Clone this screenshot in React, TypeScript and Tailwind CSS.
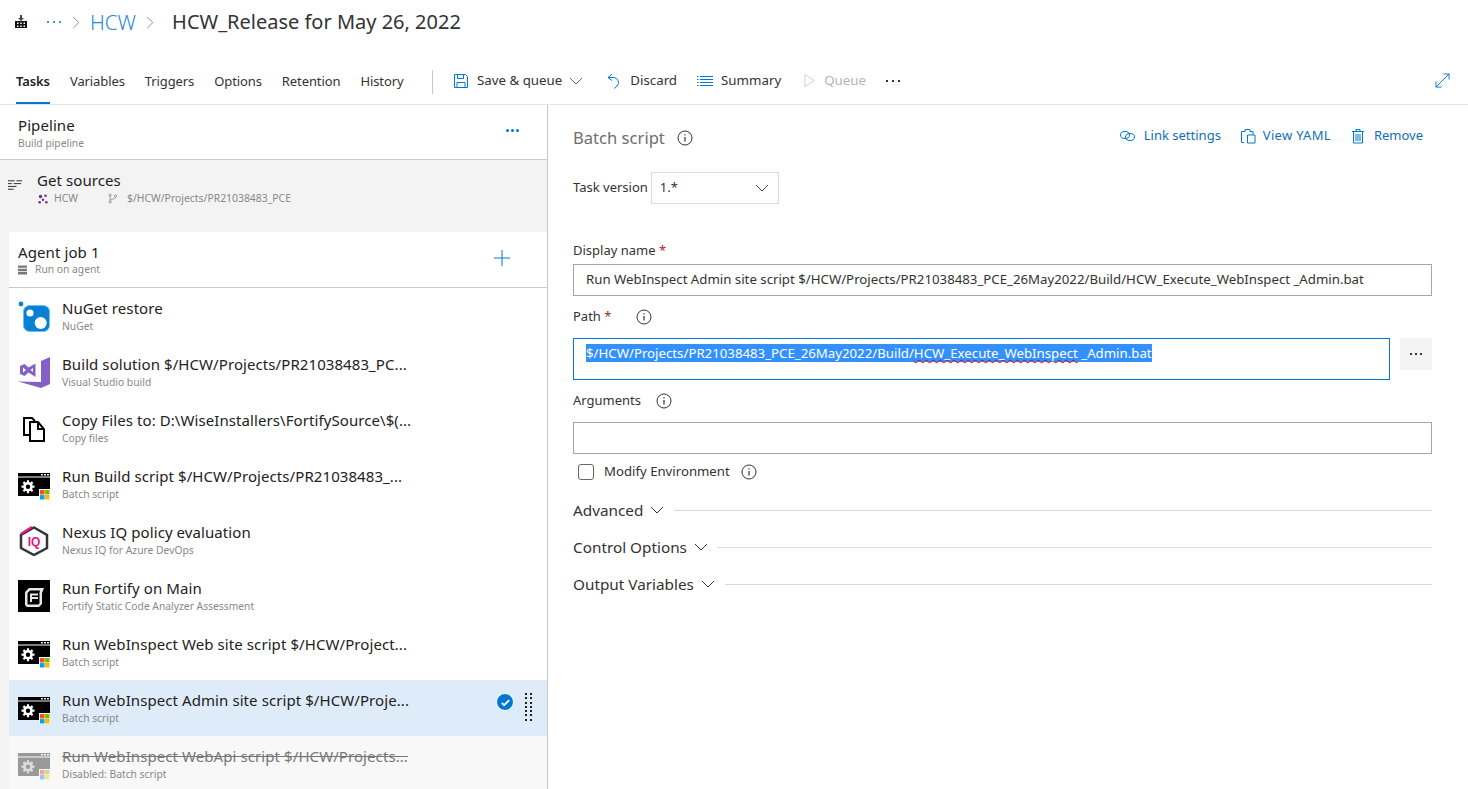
import React from "react";

const B = "#0078d4";

function Info({ className = "" }: { className?: string }) {
  return (
    <svg viewBox="0 0 16 16" className={`w-[16px] h-[16px] ${className}`} fill="none" stroke="#333" strokeWidth="1">
      <circle cx="8" cy="8" r="7" />
      <path d="M8 7v4.5M8 4.2v1.3" strokeWidth="1.2" />
    </svg>
  );
}

function Chevron({ className = "", color = "#333" }: { className?: string; color?: string }) {
  return (
    <svg viewBox="0 0 14 8" className={`w-[14px] h-[8px] ${className}`} fill="none" stroke={color} strokeWidth="1">
      <path d="M1 1l6 6 6-6" />
    </svg>
  );
}

function BatchIcon({ faded = false }: { faded?: boolean }) {
  const fg = faded ? "#999999" : "#000000";
  return (
    <svg viewBox="0 0 32 32" className="w-[32px] h-[32px]">
      <rect x="0" y="5" width="32" height="3.500" fill={fg} />
      <rect x="0" y="9.500" width="32" height="18.500" fill={fg} />
      <rect x="23" y="6" width="2" height="1.400" fill="#fff" />
      <rect x="26" y="6" width="2" height="1.400" fill="#fff" />
      <rect x="29" y="6" width="2" height="1.400" fill="#fff" />
      <g fill="none" stroke={faded ? "#ddd" : "#fff"}>
        <circle cx="10" cy="18.700" r="3.500" strokeWidth="2.600" />
        <path d="M10 12.200v2.600M10 22.600v2.600M3.500 18.700h2.600M13.900 18.700h2.600M5.400 14.100l1.800 1.800M12.800 21.500l1.800 1.800M14.600 14.100l-1.800 1.800M7.200 21.500l-1.800 1.800" strokeWidth="2.200" />
      </g>
      <rect x="21" y="21" width="11" height="11" fill="#fff" />
      <rect x="22" y="22" width="4.500" height="4.500" fill={faded ? "#f3a58c" : "#f25022"} />
      <rect x="27" y="22" width="4.500" height="4.500" fill={faded ? "#c3dc9a" : "#7fba00"} />
      <rect x="22" y="27" width="4.500" height="4.500" fill={faded ? "#8ccdf3" : "#00a4ef"} />
      <rect x="27" y="27" width="4.500" height="4.500" fill={faded ? "#ffe08c" : "#ffb900"} />
    </svg>
  );
}

function NugetIcon() {
  return (
    <svg viewBox="0 0 32 32" className="w-[32px] h-[32px]">
      <circle cx="3" cy="4" r="2.400" fill="#0a84dc" />
      <rect x="5.500" y="5.500" width="26" height="26" rx="6" fill="#0a7fd6" stroke="#6cc0ee" strokeWidth="1" />
      <circle cx="12" cy="13" r="3.600" fill="#fff" />
      <circle cx="22.700" cy="23" r="6" fill="#fff" />
    </svg>
  );
}

function VsIcon() {
  return (
    <svg viewBox="0 0 32 32" className="w-[32px] h-[32px]">
      <path d="M23 5L32 1V28L23 32L0 25.500L23 26Z" fill="#8661c5" />
      <path d="M2 10L6.500 8L10.500 11.500L17.500 7.500V21L10.500 16.500L6.500 20L2 18ZM5 11.500V16.500L8 14ZM12.500 14L15 16V12Z" fill="#8661c5" fillRule="evenodd" />
    </svg>
  );
}

function CopyIcon() {
  return (
    <svg viewBox="0 0 32 32" className="w-[32px] h-[32px]" fill="none" stroke="#000" strokeWidth="2">
      <path d="M11 23H6V6h8l3 3" />
      <path d="M12 10h8l6 7v12H12z" fill="#fff" />
      <path d="M20 10v7h6" />
    </svg>
  );
}

function NexusIcon() {
  return (
    <svg viewBox="0 0 32 32" className="w-[32px] h-[32px]">
      <path d="M16 3.500L29 11V24L16 31L3 24V11Z" fill="none" stroke="#33333a" strokeWidth="2.500" />
      <path d="M3 10L14 3" stroke="#e6127d" strokeWidth="2.500" fill="none" />
      <text x="16" y="22" textAnchor="middle" fontFamily="'Liberation Sans', sans-serif" fontWeight="700" fontSize="12" fill="#e6127d">IQ</text>
    </svg>
  );
}

function FortifyIcon() {
  return (
    <svg viewBox="0 0 32 32" className="w-[32px] h-[32px]">
      <rect width="32" height="32" fill="#000" />
      <path d="M11 8h15l-2 5v11l-3 3H9l-2-2V12z" fill="#e6e6e6" />
      <path d="M12 10.500h10l-.500 2v11l-1 1H10l-.500-.500V13z" fill="#000" />
      <path d="M12 13.500h8v2h-6v1.500h6v2h-6v3h-2z" fill="#e6e6e6" />
    </svg>
  );
}

function Row({ icon, title, sub, selected, disabled }: { icon: React.ReactNode; title: string; sub: string; selected?: boolean; disabled?: boolean }) {
  return (
    <div className={`relative flex h-[56px] ml-[9px] pl-[9px] items-center ${selected ? "bg-[#deecf9]" : disabled ? "bg-[#f8f8f8]" : "bg-white"}`}>
      <div className="w-[32px] h-[32px] shrink-0">{icon}</div>
      <div className="ml-[12px] flex flex-col">
        <div className={`text-[15px] tracking-[0.08px] leading-[19px] whitespace-nowrap ${disabled ? "text-[#777] line-through" : "text-[#222]"}`}>{title}</div>
        <div className="text-[10.3px] leading-[13px] mt-[2px] text-[#8a8886] whitespace-nowrap">{sub}</div>
      </div>
      {selected && (
        <>
          <div className="absolute left-[487px] top-[13px] w-[18px] h-[18px] rounded-full bg-[#0078d4] border border-white flex items-center justify-center">
            <svg viewBox="0 0 12 12" className="w-[11px] h-[11px]" fill="none" stroke="#fff" strokeWidth="2"><path d="M2 6.500l2.500 2.500L10 3.500" /></svg>
          </div>
          <div className="absolute left-[516px] top-[13px] grid grid-cols-2 gap-x-[3px] gap-y-[2.3px]">
            {Array.from({ length: 14 }).map((_, i) => (
              <span key={i} className="w-[2px] h-[2px] bg-[#222]" />
            ))}
          </div>
        </>
      )}
    </div>
  );
}

function Tab({ label, active }: { label: string; active?: boolean }) {
  return (
    <div className={`relative h-full flex items-center text-[13px] tracking-[-0.1px] ${active ? "font-semibold text-[#222]" : "text-[#333]"}`}>
      {label}
      {active && <div className="absolute left-0 right-0 bottom-0 h-[2px] bg-[#0078d4]" />}
    </div>
  );
}

const inputCls = "h-[32px] border border-[#a6a6a6] flex items-center px-[12px] text-[13.24px] text-[#333] whitespace-nowrap";

export default function App() {
  return (
    <div className="w-[1468px] h-[789px] overflow-hidden bg-white text-[#333] font-['Noto_Sans',sans-serif]">
      {/* breadcrumb */}
      <div className="h-[44px] flex items-center">
        <svg viewBox="0 0 14 14" className="ml-[14px] w-[14px] h-[14px]">
          <path d="M6 0h2v3h2L7 6 4 3h2V0z" fill="#444" />
          <path d="M1 6h12v7H1z" fill="#111" />
          <path d="M3 7.500h1.500V9H3zM6.300 7.500h1.500V9H6.300zM9.500 7.500H11V9H9.500zM3 10.500h1.500V12H3zM6.300 10.500h1.500V12H6.300zM9.500 10.500H11V12H9.500z" fill="#fff" />
        </svg>
        <span className="ml-[19px] flex gap-[4px]">
          <span className="w-[2px] h-[2px] rounded-full bg-[#0078d4]" />
          <span className="w-[2px] h-[2px] rounded-full bg-[#0078d4]" />
          <span className="w-[2px] h-[2px] rounded-full bg-[#0078d4]" />
        </span>
        <svg viewBox="0 0 8 14" className="ml-[11px] w-[8px] h-[13px]" fill="none" stroke="#888"><path d="M1 1l6 6-6 6" /></svg>
        <span className="ml-[10px] text-[20.500px] font-light text-[#2b88d8]">HCW</span>
        <svg viewBox="0 0 8 14" className="ml-[10px] w-[8px] h-[13px]" fill="none" stroke="#888"><path d="M1 1l6 6-6 6" /></svg>
        <span className="ml-[18px] text-[20px] text-[#333]">HCW_Release for May 26, 2022</span>
      </div>

      {/* toolbar */}
      <div className="h-[61px] border-b border-[#e6e6e6] flex items-stretch pl-[16px] pr-[18px] pt-[15px]">
        <div className="flex gap-[20px] items-stretch w-[416px]">
          <Tab label="Tasks" active />
          <Tab label="Variables" />
          <Tab label="Triggers" />
          <Tab label="Options" />
          <Tab label="Retention" />
          <Tab label="History" />
        </div>
        <div className="w-px h-[24px] bg-[#c8c8c8] self-center" />
        <div className="flex items-center text-[13.3px] text-[#333] ml-[20px] mb-[2px]">
          <svg viewBox="0 0 16 16" className="w-[16px] h-[16px]" fill="none" stroke={B}>
            <path d="M1.500 1.500h11l2 2v11h-13z" />
            <path d="M4.500 1.500v4h6v-4M4 14.500v-5h8v5" />
          </svg>
          <span className="ml-[8px]">Save &amp; queue</span>
          <Chevron className="ml-[7px]" color="#666" />
          <svg viewBox="0 0 16 16" className="ml-[23px] w-[16px] h-[16px]" fill="none" stroke={B}>
            <path d="M6 1L2 4.500 6 7.500" />
            <path d="M2 4.500h6a5 5 0 013 8.500l-3 2.500" />
          </svg>
          <span className="ml-[8px]">Discard</span>
          <svg viewBox="0 0 16 16" className="ml-[20px] w-[16px] h-[16px]" fill="none" stroke={B}>
            <path d="M3 3.500h13M3 6.500h13M3 9.500h13M3 12.500h13M0 3.500h1.500M0 6.500h1.500M0 9.500h1.500M0 12.500h1.500" />
          </svg>
          <span className="ml-[8px]">Summary</span>
          <svg viewBox="0 0 14 16" className="ml-[23px] w-[12px] h-[15px]" fill="none" stroke="#c8c8c8"><path d="M1 1l11 7-11 7z" /></svg>
          <span className="ml-[8px] text-[#b4b4b4]">Queue</span>
          <span className="ml-[20px] flex gap-[4px] items-center">
            <span className="w-[2px] h-[2px] bg-[#333]" />
            <span className="w-[2px] h-[2px] bg-[#333]" />
            <span className="w-[2px] h-[2px] bg-[#333]" />
          </span>
        </div>
        <svg viewBox="0 0 16 16" className="ml-auto self-center w-[15px] h-[15px] mb-[2px]" fill="none" stroke={B}>
          <path d="M1 15L15 1M9 1h6v6M1 9v6h6" />
        </svg>
      </div>

      <div className="flex h-[684px]">
        {/* left */}
        <div className="w-[548px] border-r border-[#c8c8c8] bg-[#f4f4f4] shrink-0 overflow-hidden">
          <div className="relative h-[55px] bg-white border-b border-[#c8c8c8] pl-[18px] pt-[11px]">
            <div className="text-[15px] tracking-[0.08px] leading-[19px] text-[#222]">Pipeline</div>
            <div className="text-[10.3px] leading-[13px] mt-[2px] text-[#8a8886]">Build pipeline</div>
            <span className="absolute left-[506px] top-[24px] flex gap-[2px]">
              <span className="w-[3px] h-[3px] rounded-full bg-[#0078d4]" />
              <span className="w-[3px] h-[3px] rounded-full bg-[#0078d4]" />
              <span className="w-[3px] h-[3px] rounded-full bg-[#0078d4]" />
            </span>
          </div>
          <div className="h-[72px] flex items-start pt-[11px] bg-[#f3f3f3]">
            <svg viewBox="0 0 16 12" className="ml-[8px] mt-[8px] w-[15px] h-[12px]" fill="none" stroke="#222">
              <path d="M0 1.500h7M9 1.500h6M0 4.500h4M6 4.500h8M0 7.500h9M0 10.500h6" />
            </svg>
            <div className="ml-[14px]">
              <div className="text-[15px] tracking-[0.08px] leading-[19px] text-[#222]">Get sources</div>
              <div className="flex items-center text-[10.4px] leading-[13px] mt-[2px] text-[#8a8886]">
                <svg viewBox="0 0 12 12" className="ml-[1px] w-[10px] h-[10px]" fill="#6b2c91">
                  <circle cx="3" cy="3" r="2" /><circle cx="9" cy="2" r="1.500" /><circle cx="6" cy="7" r="1.500" /><circle cx="2" cy="10" r="1.500" /><circle cx="10" cy="10" r="1.500" />
                </svg>
                <span className="ml-[6px] w-[54px]">HCW</span>
                <svg viewBox="0 0 12 12" className="w-[10px] h-[11px]" fill="none" stroke="#888">
                  <circle cx="2.500" cy="2" r="1.300" /><circle cx="2.500" cy="10" r="1.300" /><circle cx="9" cy="3" r="1.300" /><path d="M2.500 3.500v5M9 4.500C9 7 5 6 3 8" />
                </svg>
                <span className="ml-[9px]">$/HCW/Projects/PR21038483_PCE</span>
              </div>
            </div>
          </div>
          <div className="relative h-[56px] ml-[9px] bg-white border-b border-[#c8c8c8] pl-[9px] pt-[11px]">
            <div className="text-[15px] tracking-[0.1px] leading-[19px] text-[#222]">Agent job 1</div>
            <div className="flex items-center text-[10.3px] leading-[13px] mt-[1px] text-[#8a8886]">
              <svg viewBox="0 0 10 10" className="w-[9px] h-[10px]" fill="#777">
                <path d="M0 0h10v2.500H0zM0 3.500h10V6H0zM0 7h10v3H0z" />
              </svg>
              <span className="ml-[8px]">Run on agent</span>
            </div>
            <svg viewBox="0 0 16 16" className="absolute left-[485px] top-[18px] w-[16px] h-[16px]" fill="none" stroke={B}>
              <path d="M8 0v16M0 8h16" />
            </svg>
          </div>
          <Row icon={<NugetIcon />} title="NuGet restore" sub="NuGet" />
          <Row icon={<VsIcon />} title="Build solution $/HCW/Projects/PR21038483_PC..." sub="Visual Studio build" />
          <Row icon={<CopyIcon />} title="Copy Files to: D:\WiseInstallers\FortifySource\$(..." sub="Copy files" />
          <Row icon={<BatchIcon />} title="Run Build script $/HCW/Projects/PR21038483_..." sub="Batch script" />
          <Row icon={<NexusIcon />} title="Nexus IQ policy evaluation" sub="Nexus IQ for Azure DevOps" />
          <Row icon={<FortifyIcon />} title="Run Fortify on Main" sub="Fortify Static Code Analyzer Assessment" />
          <Row icon={<BatchIcon />} title="Run WebInspect Web site script $/HCW/Project..." sub="Batch script" />
          <Row icon={<BatchIcon />} title="Run WebInspect Admin site script $/HCW/Proje..." sub="Batch script" selected />
          <Row icon={<BatchIcon faded />} title="Run WebInspect WebApi script $/HCW/Projects..." sub="Disabled: Batch script" disabled />
        </div>

        {/* right */}
        <div className="flex-1 pl-[25px] pr-[36px] relative">
          <div className="flex items-center h-[20px] mt-[23px]">
            <span className="text-[16.6px] text-[#6e6e6e]">Batch script</span>
            <Info className="ml-[12px]" />
            <div className="ml-auto flex items-center text-[13px] text-[#106ebe] mr-[9px] mb-[4px]">
              <svg viewBox="0 0 16 12" className="w-[17px] h-[12px]" fill="none" stroke={B}>
                <ellipse cx="5.500" cy="5" rx="4.500" ry="3.500" /><ellipse cx="10.500" cy="7" rx="4.500" ry="3.500" />
              </svg>
              <span className="ml-[8px]">Link settings</span>
              <svg viewBox="0 0 16 16" className="ml-[19px] w-[16px] h-[16px]" fill="none" stroke={B}>
                <path d="M4 14.500H1.500v-11H5V1.500h5v2h3v3" /><path d="M7.500 7h7.500v8H7.500z" />
              </svg>
              <span className="ml-[7px] tracking-[0.3px]">View YAML</span>
              <svg viewBox="0 0 16 16" className="ml-[19px] w-[16px] h-[16px]" fill="none" stroke={B}>
                <path d="M2 3.500h12M6 3.500V1.500h4v2M3.500 3.500v11.500h9V3.500M6 6v7M8 6v7M10 6v7" />
              </svg>
              <span className="ml-[8px]">Remove</span>
            </div>
          </div>

          <div className="flex items-center mt-[24px]">
            <span className="text-[13px] leading-[18px] mr-[3px] mb-[2px]">Task version</span>
            <div className="w-[128px] h-[32px] border border-[#d9d9d9] flex items-center justify-between pl-[8px] pr-[9px] text-[13px]">
              <span>1.*</span>
              <Chevron color="#444" />
            </div>
          </div>

          <div className="text-[13px] leading-[18px] mt-[37px]">Display name <span className="text-[#a4262c]">*</span></div>
          <div className={`${inputCls} mt-[5px]`}>Run WebInspect Admin site script $/HCW/Projects/PR21038483_PCE_26May2022/Build/HCW_Execute_WebInspect _Admin.bat</div>

          <div className="flex items-center mt-[12px] h-[18px] text-[13px]">
            <span>Path <span className="text-[#a4262c]">*</span></span>
            <Info className="ml-[25px]" />
          </div>
          <div className="flex mt-[12px]">
            <div className="flex-1 h-[42px] border border-[#0078d4] pl-[12px] pt-[5px] text-[13.24px] leading-[19px] whitespace-nowrap">
              <span className="bg-[#3390ff] text-white">
                $/HCW/Projects/PR21038483_PCE_26May2022/Build/<span className="underline decoration-wavy decoration-[#e00000] decoration-1">HCW_Execute_WebInspect</span> _Admin.bat
              </span>
            </div>
            <div className="ml-[10px] w-[32px] h-[32px] bg-[#f3f3f3] flex items-center justify-center gap-[3px]">
              <span className="w-[2px] h-[2px] bg-[#333]" />
              <span className="w-[2px] h-[2px] bg-[#333]" />
              <span className="w-[2px] h-[2px] bg-[#333]" />
            </div>
          </div>

          <div className="flex items-center mt-[12px] h-[18px] text-[13px]">
            <span>Arguments</span>
            <Info className="ml-[15px]" />
          </div>
          <div className={`${inputCls} mt-[12px]`} />

          <div className="flex items-center mt-[9px] h-[18px] text-[13.2px] pl-[5px]">
            <span className="w-[16px] h-[16px] border border-[#666] rounded-[3px] bg-white" />
            <span className="ml-[10px]">Modify Environment</span>
            <Info className="ml-[11px]" />
          </div>

          {[
            ["Advanced", "mt-[19px]"],
            ["Control Options", "mt-[17px]"],
            ["Output Variables", "mt-[17px]"],
          ].map(([label, cls]) => (
            <div key={label} className={`flex items-center h-[20px] ${cls}`}>
              <span className="text-[15.3px] text-[#333]">{label}</span>
              <Chevron className="ml-[7px]" />
              <div className="ml-[10px] flex-1 h-px bg-[#d9d9d9]" />
            </div>
          ))}
        </div>
      </div>
    </div>
  );
}
